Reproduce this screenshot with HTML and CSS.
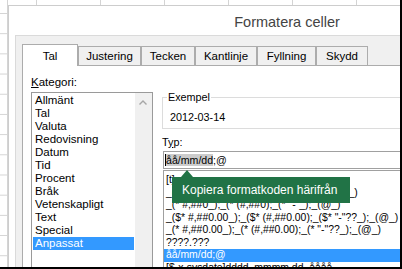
FILE: index.html
```html
<!DOCTYPE html>
<html lang="sv">
<head>
<meta charset="utf-8">
<title>Formatera celler</title>
<link rel="stylesheet" href="styles.css">
</head>
<body>
<div class="screen">
  <div class="dialog">
    <div class="titlebar">Formatera celler</div>
    <div class="body">
      <div class="tabs">
        <div class="tab tab-active w-tal">Tal</div>
        <div class="tab w-justering">Justering</div>
        <div class="tab w-tecken">Tecken</div>
        <div class="tab w-kantlinje">Kantlinje</div>
        <div class="tab w-fyllning">Fyllning</div>
        <div class="tab w-skydd">Skydd</div>
      </div>
      <div class="panel">
        <div class="col-left">
          <div class="label"><u>K</u>ategori:</div>
          <div class="listbox">
            <ul class="items">
              <li>Allmänt</li>
              <li>Tal</li>
              <li>Valuta</li>
              <li>Redovisning</li>
              <li>Datum</li>
              <li>Tid</li>
              <li>Procent</li>
              <li>Bråk</li>
              <li>Vetenskapligt</li>
              <li>Text</li>
              <li>Special</li>
              <li class="selected">Anpassat</li>
            </ul>
            <div class="scrollbar">
              <svg class="chev" width="17" height="17" viewBox="0 0 17 17"><polyline points="4.5,11.5 8,8 11.5,11.5" fill="none" stroke="#a6a6a6" stroke-width="1.4"/></svg>
            </div>
          </div>
        </div>
        <div class="col-right">
          <div class="group">
            <div class="legend">Exempel</div>
            <div class="sample">2012-03-14</div>
          </div>
          <div class="field-label">T<u>y</u>p:</div>
          <div class="input"><span class="sel">åå/mm/dd</span>;@</div>
          <div class="typelist">
            <ul class="codes">
              <li>[t]:mm:ss</li>
              <li>_($* #,##0_);_($* (#,##0);_($* "-"_);_(@_)</li>
              <li>_(* #,##0_);_(* (#,##0);_(* "-"_);_(@_)</li>
              <li>_($* #,##0.00_);_($* (#,##0.00);_($* "-"??_);_(@_)</li>
              <li>_(* #,##0.00_);_(* (#,##0.00);_(* "-"??_);_(@_)</li>
              <li>????.???</li>
              <li class="selected">åå/mm/dd;@</li>
              <li>[$-x-sysdate]dddd, mmmm dd, åååå</li>
            </ul>
            <div class="tooltip">Kopiera formatkoden härifrån</div>
          </div>
        </div>
      </div>
    </div>
  </div>
</div>
</body>
</html>
```
FILE: styles.css
```css
* { box-sizing: border-box; }
html, body { margin: 0; padding: 0; }
body {
  font-family: "Liberation Sans", Arial, sans-serif;
  color: #000;
  background: #fff;
}
.screen {
  width: 402px;
  height: 269px;
  overflow: hidden;
  border-right: 2px solid #000;
  border-bottom: 2px solid #000;
  padding: 5px 0 0 8px;
  background-color: #fff;
  background-image:
    linear-gradient(to right, #d4d4d4 0 1px, transparent 1px),
    linear-gradient(to right, #d4d4d4 0 1px, transparent 1px),
    linear-gradient(to bottom, #d4d4d4 0 1px, transparent 1px);
  background-size: 64px 100%, 1px 100%, 100% 20.2px;
  background-position: 36px 0, 7px 0, 0 13px;
  background-repeat: repeat-x, no-repeat, repeat-y;
}
.dialog {
  width: 558px;
  height: 420px;
  border: 1px solid #cdcdcd;
  background: #fff;
  display: flex;
  flex-direction: column;
}
.titlebar {
  height: 29px;
  padding-top: 4px;
  line-height: 25px;
  text-align: center;
  font-size: 14.5px;
  color: #444;
}
.body {
  flex: 1;
  margin: 0 6px;
  border-top: 1px solid #dadada;
  border-left: 1px solid #dadada;
  background: #f0f0f0;
  padding: 8px 0 0 6px;
  display: flex;
  flex-direction: column;
}
.tabs {
  display: flex;
  align-items: flex-end;
  height: 21px;
}
.tab {
  height: 19px;
  border: 1px solid #acacac;
  border-bottom: 0;
  background: #f0f0f0;
  font-size: 11.5px;
  line-height: 18px;
  text-align: center;
  white-space: nowrap;
}
.tab-active {
  height: 22px;
  padding-top: 2px;
  background: #fff;
  margin-bottom: -1px;
  position: relative;
  z-index: 1;
}
.w-tal { width: 56px; }
.w-justering { width: 63px; }
.w-tecken { width: 54px; }
.w-kantlinje { width: 62px; }
.w-fyllning { width: 59px; }
.w-skydd { width: 52px; }

.panel {
  flex: 1;
  background: #fff;
  border-top: 1px solid #acacac;
  border-left: 1px solid #acacac;
  padding: 10px 0 0 8px;
  display: grid;
  grid-template-columns: 122px 1fr;
  column-gap: 9px;
  align-items: start;
}
.label {
  font-size: 11.5px;
  line-height: 13px;
}
.listbox {
  margin-top: 3px;
  height: 200px;
  border: 1px solid #9a9a9a;
  display: flex;
  justify-content: space-between;
}
.items {
  list-style: none;
  margin: 0 0 0 1px;
  padding: 1px 0 0 0;
  width: 101px;
}
.items li {
  padding-left: 2px;
  font-size: 11.5px;
  line-height: 13px;
  height: 13px;
  white-space: nowrap;
}
.selected {
  background: #3399ff;
  color: #fff;
}
.scrollbar {
  width: 17px;
  background: #f0f0f0;
}
.chev { display: block; }

.col-right {
  padding-top: 21px;
  min-width: 0;
  font-size: 10.8px;
  line-height: 13px;
}
.group {
  border: 1px solid #dcdcdc;
  padding: 0 4px 4px 4px;
}
.legend {
  width: fit-content;
  margin-top: -7px;
  padding: 0 1px;
  background: #fff;
}
.sample {
  margin-top: 7px;
  padding-left: 3px;
}
.field-label {
  margin-top: 7px;
}
.input {
  margin-top: 2px;
  margin-left: 1px;
  height: 18px;
  border: 1px solid #a0a0a0;
  padding-left: 1px;
  font-size: 10.6px;
  line-height: 16px;
  white-space: nowrap;
}
.sel {
  background: #cccccc;
  border-left: 1px solid #000;
}
.typelist {
  position: relative;
  margin-top: 1px;
  margin-left: 1px;
  height: 150px;
  border: 1px solid #a0a0a0;
  padding-top: 3px;
}
.codes {
  list-style: none;
  margin: 0;
  padding: 0;
}
.codes li {
  padding-left: 2px;
  font-size: 10.4px;
  line-height: 12.5px;
  height: 12.5px;
  white-space: nowrap;
}
.tooltip {
  position: absolute;
  left: 8px;
  top: 6px;
  width: 178px;
  height: 26px;
  background: #217346;
  color: #fff;
  font-size: 12px;
  line-height: 26px;
  padding-left: 10px;
  white-space: nowrap;
}
.tooltip::before {
  content: "";
  position: absolute;
  left: 9px;
  top: -7px;
  border-left: 6.5px solid transparent;
  border-right: 6.5px solid transparent;
  border-bottom: 7px solid #217346;
}
```
